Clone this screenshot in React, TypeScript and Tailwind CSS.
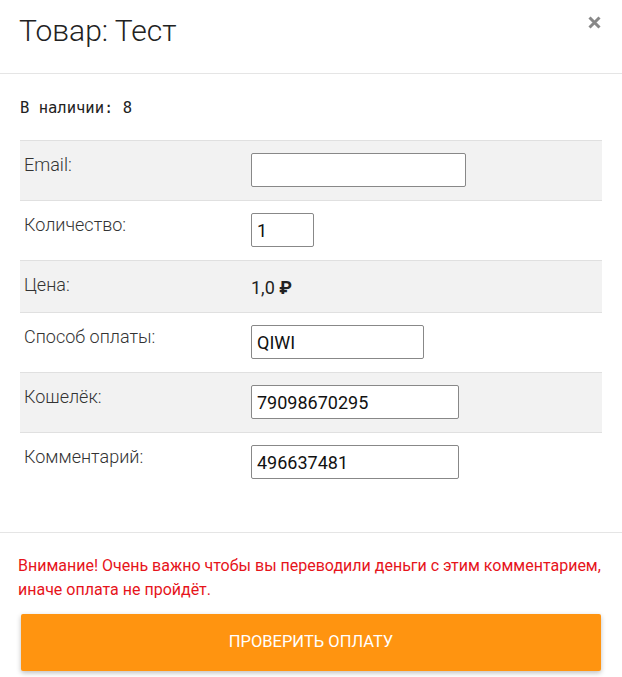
import React from "react";

const rows = [
  { label: "Email:", kind: "input", value: "", width: "w-[215px]", bg: true },
  { label: "Количество:", kind: "input", value: "1", width: "w-[63px]", bg: false },
  { label: "Цена:", kind: "price", value: "1,0", width: "", bg: true },
  { label: "Способ оплаты:", kind: "input", value: "QIWI", width: "w-[173px]", bg: false },
  { label: "Кошелёк:", kind: "input", value: "79098670295", width: "w-[208px]", bg: true },
  { label: "Комментарий:", kind: "input", value: "496637481", width: "w-[208px]", bg: false },
];

const App: React.FC = () => {
  return (
    <div className="w-[622px] h-[677px] bg-white font-['Roboto',sans-serif] text-[#333] overflow-hidden">
      {/* Header */}
      <div className="h-[74px] flex items-start justify-between border-b border-[#e5e5e5] px-5">
        <h4 className="mt-[13px] -ml-[1px] text-[30px] font-light leading-[36px] text-[#222]">
          Товар: Тест
        </h4>
        <button className="mt-[16px] mr-[1px] text-[#888]" aria-label="close">
          <svg width="13" height="13" viewBox="0 0 13 13">
            <path d="M1.5 1.5 L11.5 11.5 M11.5 1.5 L1.5 11.5" stroke="currentColor" strokeWidth="3" />
          </svg>
        </button>
      </div>

      {/* Body */}
      <div className="px-5 pt-[22px] pb-[40px] border-b border-[#e5e5e5]">
        <p className="font-['DejaVu_Sans_Mono',monospace] text-[15.5px] leading-[24px] text-[#222] mb-[20px] whitespace-pre">
          В наличии: 8
        </p>
        <div className="border-t border-[#e0e0e0]">
          {rows.map((r) => (
            <div
              key={r.label}
              className={`grid grid-cols-[231px_1fr] border-b border-[#e0e0e0] last:border-b-0 pt-[12px] pb-[13px] ${
                r.bg ? "bg-[#f2f2f2]" : "bg-white"
              }`}
            >
              <div className="pl-1 text-[18px] font-light leading-[24px] text-[#333]">
                {r.label}
              </div>
              <div>
                {r.kind === "input" ? (
                  <input
                    type="text"
                    defaultValue={r.value}
                    className={`${r.width} h-[34px] border border-[#888] rounded-[2px] bg-white px-[5px] text-[18px] text-[#111] outline-none`}
                  />
                ) : (
                  <div className="h-[26px] pt-[3px] text-[18px] leading-[24px] text-[#222]">
                    {r.value} <span className="font-bold">₽</span>
                  </div>
                )}
              </div>
            </div>
          ))}
        </div>
      </div>

      {/* Footer */}
      <div className="px-[18px] pt-[21px]">
        <p className="text-[16px] leading-[24px] text-[#e6141b]">
          Внимание! Очень важно чтобы вы переводили деньги с этим комментарием,
          иначе оплата не пройдёт.
        </p>
        <button className="mt-[12px] ml-[3px] w-[580px] h-[57px] rounded-[2px] bg-[#ff9410] text-white text-[16.5px] uppercase shadow-[0_2px_5px_rgba(0,0,0,0.25)]">
          Проверить оплату
        </button>
      </div>
    </div>
  );
};

export default App;
